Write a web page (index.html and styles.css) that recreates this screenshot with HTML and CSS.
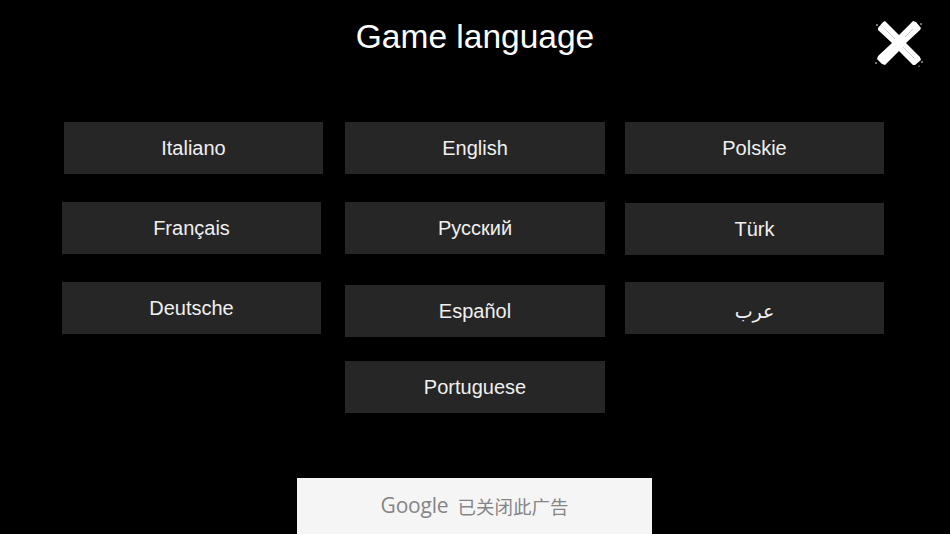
FILE: index.html
```html
<!DOCTYPE html>
<html lang="en">
<head>
<meta charset="utf-8">
<title>Game language</title>
<link rel="stylesheet" href="styles.css">
</head>
<body>
<div class="screen">
  <header class="top">
    <h1 class="title">Game language</h1>
    <button class="close" aria-label="Close">
      <svg width="48" height="48" viewBox="0 0 48 48">
        <path fill="#fff" d="M3 9 L8 3 L10 2 L24 16 L38 2 L41 3 L46 9 L45 11 L31 24 L45 38 L46 41 L40 46 L38 46 L24 32 L10 46 L7 45 L2 40 L3 37 L17 24 L3 11 Z"/>
        <g fill="#fff">
          <circle cx="2" cy="6" r="0.8"/>
          <circle cx="46" cy="5" r="0.8"/>
          <circle cx="47" cy="43" r="0.8"/>
          <circle cx="1" cy="44" r="0.8"/>
          <circle cx="44" cy="47" r="0.6"/>
        </g>
        <g stroke="#000" stroke-width="0.6" opacity="0.35">
          <line x1="9" y1="9" x2="20" y2="20"/>
          <line x1="28" y1="28" x2="39" y2="39"/>
          <line x1="38" y1="10" x2="30" y2="18"/>
        </g>
      </svg>
    </button>
  </header>
  <main class="grid">
    <div class="lang c1">Italiano</div>
    <div class="lang c2">English</div>
    <div class="lang c3">Polskie</div>
    <div class="lang c1 s1">Français</div>
    <div class="lang c2">Русский</div>
    <div class="lang c3 d1">Türk</div>
    <div class="lang c1 s1">Deutsche</div>
    <div class="lang c2 d2">Español</div>
    <div class="lang c3 ar">عرب</div>
    <div class="lang c2 last">Portuguese</div>
  </main>
  <footer class="ad">
    <span class="g">Google</span><span class="cn">已关闭此广告</span>
  </footer>
</div>
</body>
</html>
```
FILE: styles.css
```css
html, body {
  margin: 0;
  padding: 0;
  background: #000;
}
.screen {
  width: 950px;
  height: 534px;
  position: relative;
  overflow: hidden;
  display: flex;
  flex-direction: column;
  font-family: "Liberation Sans", Arial, sans-serif;
  color: #f2f2f2;
}
.top {
  height: 74px;
  display: flex;
  justify-content: center;
}
.title {
  margin: 16px 0 0;
  font-size: 33.5px;
  font-weight: normal;
  line-height: 42px;
  color: #fff;
}
.close {
  position: absolute;
  left: 875px;
  top: 19px;
  width: 48px;
  height: 48px;
  padding: 0;
  border: 0;
  background: none;
}
.close svg { display: block; }
.grid {
  margin: 48px 0 0 64px;
  display: grid;
  grid-template-columns: 259px 22px 260px 20px 259px;
  row-gap: 28px;
  grid-auto-rows: 52px;
  width: 820px;
}
.lang {
  background: #262626;
  display: flex;
  align-items: center;
  justify-content: center;
  padding-top: 1px;
  box-sizing: border-box;
  font-size: 20px;
  color: #f0f0f0;
}
.c1 { grid-column: 1; }
.c2 { grid-column: 3; }
.c3 { grid-column: 5; }
.s1 { margin-left: -2px; margin-right: 2px; }
.d1 { margin-top: 1px; margin-bottom: -1px; }
.d2 { margin-top: 3px; margin-bottom: -3px; }
.ar {
  font-family: "DejaVu Sans", sans-serif;
  font-size: 19px;
  padding-top: 6px;
}
.last { margin-top: -1px; margin-bottom: 1px; }
.ad {
  margin: auto 0 0 297px;
  width: 355px;
  height: 56px;
  background: #f5f5f5;
  display: flex;
  align-items: center;
  justify-content: center;
  gap: 9px;
  color: #858585;
}
.g {
  font-family: "Open Sans", "Noto Sans", sans-serif;
  font-size: 21px;
  letter-spacing: -0.2px;
  margin-top: -2px;
}
.cn {
  font-family: "Noto Sans CJK SC", sans-serif;
  font-size: 18.5px;
}
```
